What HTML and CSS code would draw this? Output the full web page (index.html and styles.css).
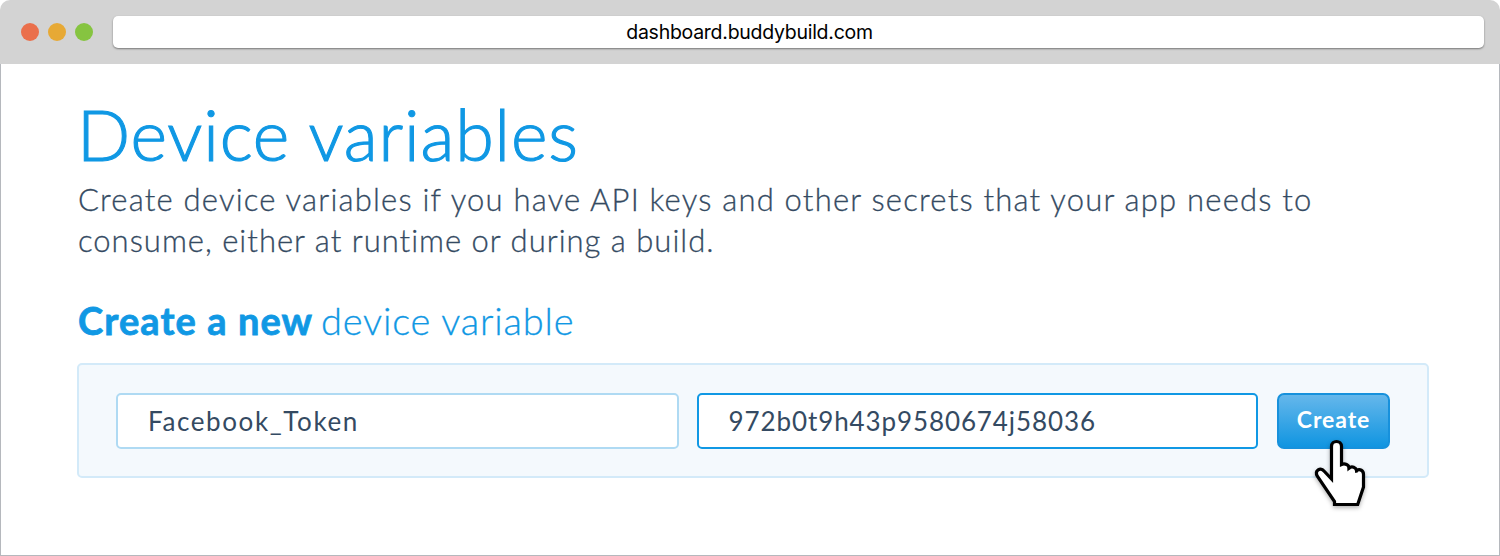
FILE: index.html
```html
<!DOCTYPE html>
<html lang="en">
<head>
<meta charset="utf-8">
<title>Device variables</title>
<link rel="stylesheet" href="styles.css">
</head>
<body>
<div class="window">
  <header class="bar">
    <span class="dot red"></span><span class="dot amber"></span><span class="dot green"></span>
    <div class="address">dashboard.buddybuild.com</div>
  </header>
  <main class="content">
    <h1 class="title">Device variables</h1>
    <p class="intro">Create device variables if you have API keys and other secrets that your app needs to<br><span class="intro-end">consume, either at runtime or during a build.</span></p>
    <h2 class="subtitle"><strong class="strong">Create a new</strong><span>device variable</span></h2>
    <form class="panel">
      <div class="field name">Facebook_Token</div>
      <div class="field active">972b0t9h43p9580674j58036</div>
      <button class="create" type="button">Create</button>
    </form>
  </main>
  <svg class="cursor" viewBox="0 0 80 80" width="80" height="80" aria-hidden="true">
    <path d="M31.500 49V16.500C31.500 9.800 41.500 9.800 41.500 16.500V34.500C45 33 49 35 49 38C52 35.500 56 37.500 56.500 40.500C60 38.500 63.500 40.500 63.500 44.500V57L57.700 74.500H34.500V71.500L17.500 46.500C14 40.500 20.500 36.500 24.500 41.500L31.500 49Z"/>
    <path class="knuckles" d="M49 37V39.500M56.500 40V42.500"/>
  </svg>
</div>
</body>
</html>
```
FILE: styles.css
```css
*{box-sizing:border-box}
body{margin:0;background:#fff;font-family:Lato,sans-serif}
.window{position:relative;height:556px;border-radius:10px 10px 0 0;overflow:hidden}
.bar{height:64px;background:#d3d3d3;display:flex;align-items:center;padding:0 16px 0 21px;gap:9px}
.dot{width:18px;height:18px;border-radius:50%}
.red{background:#ea6f4b}.amber{background:#e7a935}.green{background:#86c440}
.address{flex:1;height:32px;margin-left:11px;padding-right:98px;background:#fff;border-radius:5px;box-shadow:0 1px 2px #777;text-align:center;font:19.5px/32px Inter,sans-serif;letter-spacing:-.27px;color:#000}
.content{height:492px;border:1px solid #b5b8bd;border-top:0;padding:34px 70px 0 76px}
.title{margin:0;font-size:70px;line-height:72px;font-weight:300;letter-spacing:.85px;color:#1098e4;-webkit-text-stroke:1.1px #1098e4}
.intro{margin:9px 0 0;padding-left:1px;font-size:31px;line-height:41px;font-weight:300;letter-spacing:1.21px;color:#344a62;white-space:nowrap;-webkit-text-stroke:.3px #344a62}
.intro-end{letter-spacing:1px}
.subtitle{display:flex;gap:9px;margin:35px 0 0;padding-left:1px;font-size:38px;line-height:48px;font-weight:300;letter-spacing:.8px;color:#1098e4;-webkit-text-stroke:.3px #1098e4}
.strong{width:234px;white-space:nowrap;font-weight:700;letter-spacing:1.1px;-webkit-text-stroke:.8px #1098e4}
.panel{margin-top:19px;width:1352px;height:115px;border:2px solid #d3eaf9;border-radius:5px;background:#f4f9fd;display:flex;align-items:center;padding:0 37px;gap:19px}
.field{width:562px;height:56px;background:#fff;border:2px solid #afdaf3;border-radius:5px;padding-left:30px;font-size:26px;line-height:52px;letter-spacing:.9px;color:#344a62}
.name{letter-spacing:1.6px;width:563px;margin-right:-1px}
.active{border-color:#1098e4}
.create{width:113px;height:56px;border:2px solid #1791dc;border-radius:7px;background:linear-gradient(#65b7eb,#1095e1);color:#fff;font:bold 23px Lato,sans-serif;letter-spacing:.9px;padding:0 0 3px}
.cursor{position:absolute;left:1300px;top:430px;overflow:visible;fill:#fff;stroke:#000;stroke-width:3.2;filter:drop-shadow(0 2px 2px rgba(0,0,0,.3))}
.knuckles{fill:none;stroke-width:2.5}
```
